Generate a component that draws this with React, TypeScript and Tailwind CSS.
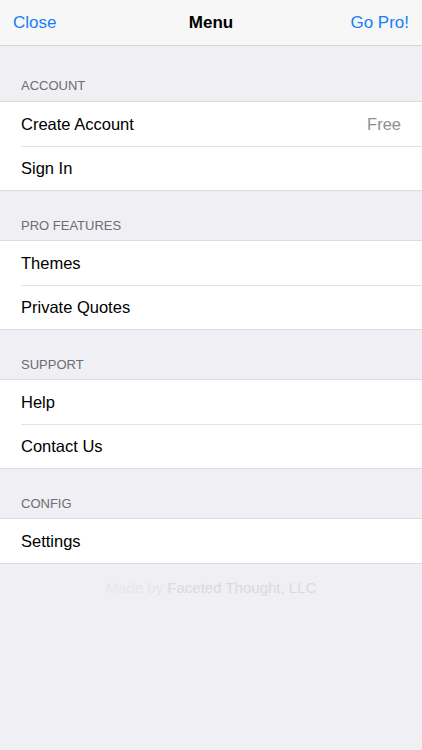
import * as React from "react";

type Row = { label: string; detail?: string };
type Section = { title: string; rows: Row[] };

const sections: Section[] = [
  { title: "ACCOUNT", rows: [{ label: "Create Account", detail: "Free" }, { label: "Sign In" }] },
  { title: "PRO FEATURES", rows: [{ label: "Themes" }, { label: "Private Quotes" }] },
  { title: "SUPPORT", rows: [{ label: "Help" }, { label: "Contact Us" }] },
  { title: "CONFIG", rows: [{ label: "Settings" }] },
];

function MenuSection({ section, first }: { section: Section; first: boolean }) {
  return (
    <section>
      <div
        className={
          first
            ? "pt-[32px] pb-[7px] pl-[21px] text-[13px] leading-[16px] text-[#6d6d72]"
            : "pt-[27px] pb-[6px] pl-[21px] text-[13px] leading-[16px] text-[#6d6d72]"
        }
      >
        {section.title}
      </div>
      <div className="bg-white border-y border-[#dcdce0]">
        {section.rows.map((row, i) => (
          <div key={row.label} className="pl-[21px]">
            <div
              className={
                i > 0
                  ? "flex h-[44px] items-center justify-between pr-[21px] border-t border-[#e2e2e6]"
                  : "flex h-[44px] items-center justify-between pr-[21px]"
              }
            >
              <span className="text-[16.5px] text-black">{row.label}</span>
              {row.detail && <span className="text-[16.5px] text-[#8e8e93]">{row.detail}</span>}
            </div>
          </div>
        ))}
      </div>
    </section>
  );
}

export default function App() {
  return (
    <div
      className="min-h-[750px] w-full bg-[#efeff4]"
      style={{ fontFamily: '"Liberation Sans", Arial, sans-serif' }}
    >
      <header className="relative flex h-[46px] items-center justify-between border-b border-[#d6d6da] bg-[#f7f7f8] px-[13px]">
        <button className="text-[17px] text-[#157efb]">Close</button>
        <h1 className="absolute left-1/2 -translate-x-1/2 text-[17px] font-bold text-black">Menu</h1>
        <button className="text-[17px] text-[#157efb]">Go Pro!</button>
      </header>

      {sections.map((s, i) => (
        <MenuSection key={s.title} section={s} first={i === 0} />
      ))}

      <p className="pt-[15px] text-center text-[15px] leading-[18px]">
        <span className="text-[#e6e6eb]">Made by </span>
        <span className="text-[#dadadf]">Faceted Thought, LLC</span>
      </p>
    </div>
  );
}
